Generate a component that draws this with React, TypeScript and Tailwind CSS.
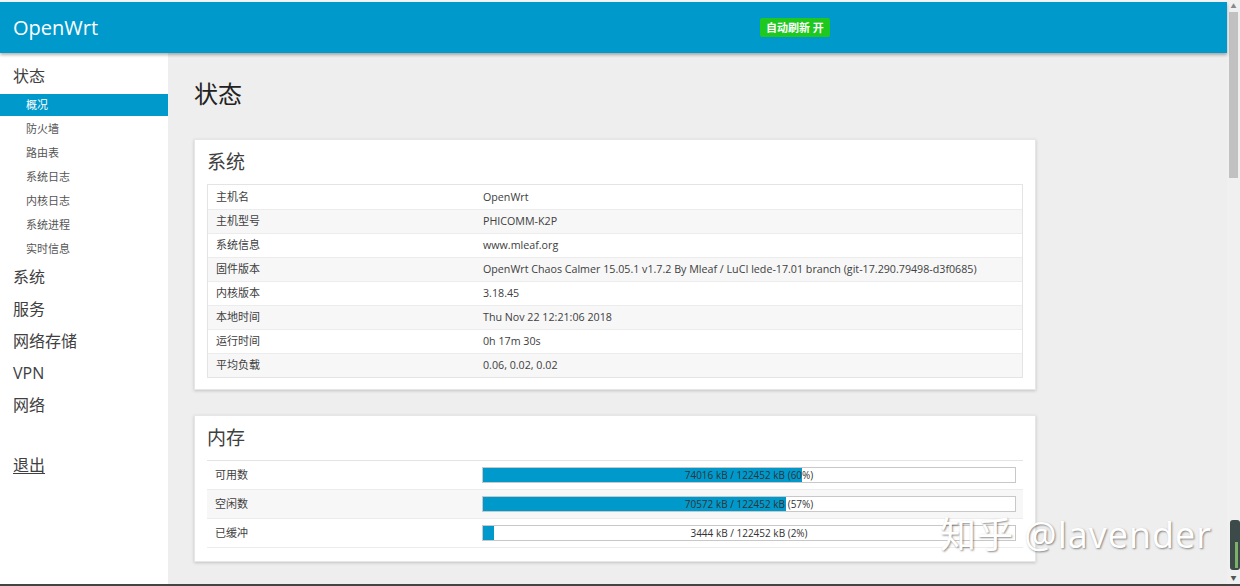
const font = { fontFamily: '"Open Sans", "Noto Sans CJK SC", sans-serif' };

const subMenu = ['概况', '防火墙', '路由表', '系统日志', '内核日志', '系统进程', '实时信息'];
const topMenu = ['系统', '服务', '网络存储', 'VPN', '网络'];

const sysRows = [
  ['主机名', 'OpenWrt'],
  ['主机型号', 'PHICOMM-K2P'],
  ['系统信息', 'www.mleaf.org'],
  ['固件版本', 'OpenWrt Chaos Calmer 15.05.1 v1.7.2 By Mleaf / LuCI lede-17.01 branch (git-17.290.79498-d3f0685)'],
  ['内核版本', '3.18.45'],
  ['本地时间', 'Thu Nov 22 12:21:06 2018'],
  ['运行时间', '0h 17m 30s'],
  ['平均负载', '0.06, 0.02, 0.02'],
];

const memRows = [
  { label: '可用数', text: '74016 kB / 122452 kB (60%)', pct: 60 },
  { label: '空闲数', text: '70572 kB / 122452 kB (57%)', pct: 57 },
  { label: '已缓冲', text: '3444 kB / 122452 kB (2%)', pct: 2 },
];

function Sidebar() {
  return (
    <div className="w-[168px] shrink-0 bg-white pt-[11px]">
      <div className="pl-[13px] h-[24px] leading-[24px] text-[16px] text-[#404040]">状态</div>
      <div className="mt-[6px]">
        {subMenu.map((s, i) => (
          <div
            key={s}
            className={
              i === 0
                ? 'h-[22px] leading-[22px] pl-[26px] text-[11px] bg-[#0099cc] text-white mb-[1px]'
                : 'h-[24px] leading-[24px] pl-[26px] text-[11px] text-[#555]'
            }
          >
            {s}
          </div>
        ))}
      </div>
      <div>
        {topMenu.map((s) => (
          <div key={s} className="h-[32px] leading-[32px] pl-[13px] text-[16px] text-[#404040]">
            {s}
          </div>
        ))}
      </div>
      <div className="mt-[32px] pl-[13px] text-[16px] text-[#404040] underline underline-offset-2">退出</div>
    </div>
  );
}

function Card({ title, children, className }: { title: string; children: React.ReactNode; className?: string }) {
  return (
    <div className={'w-[842px] bg-white shadow-[0_1px_3px_rgba(0,0,0,0.18)] border border-[#e6e6e6] px-[12px] ' + (className ?? '')}>
      <div className="h-[44px] leading-[44px] text-[19px] text-[#404040]">{title}</div>
      {children}
    </div>
  );
}

function SystemTable() {
  return (
    <div className="border border-[#e4e4e4]">
      {sysRows.map(([k, v], i) => (
        <div
          key={k}
          className={
            'flex h-[24px] items-center text-[11px] text-[#404040] border-t border-[#ececec] first:border-t-0 ' +
            (i % 2 === 1 ? 'bg-[#f7f7f7]' : 'bg-white')
          }
        >
          <div className="w-[275px] pl-[8px]">{k}</div>
          <div className="flex-1 whitespace-nowrap text-[10.7px]">{v}</div>
        </div>
      ))}
    </div>
  );
}

function MemTable() {
  return (
    <div className="border-t border-[#e4e4e4]">
      {memRows.map((r, i) => (
        <div
          key={r.label}
          className={
            'flex h-[29px] items-center text-[11px] text-[#404040] border-b border-[#ececec] ' +
            (i % 2 === 1 ? 'bg-[#f7f7f7]' : 'bg-white')
          }
        >
          <div className="w-[275px] pl-[8px]">{r.label}</div>
          <div className="relative w-[534px] h-[16px] border border-[#c8c8c8] bg-white">
            <div className="absolute left-0 top-0 bottom-0 bg-[#0099cc]" style={{ width: `${r.pct}%` }} />
            <div className="absolute inset-0 flex items-center justify-center text-[10px] text-[#333]">{r.text}</div>
          </div>
        </div>
      ))}
    </div>
  );
}

export default function App() {
  return (
    <div className="relative w-[1240px] h-[586px] overflow-hidden bg-[#eeeeee] flex flex-col" style={font}>
      <div className="flex flex-1 min-h-0">
        <div className="flex-1 flex flex-col min-w-0">
          <div className="h-[2px] bg-[#f4f4f4]" />
          <div className="relative z-10 h-[51px] bg-[#0099cc] flex items-center shadow-[0_2px_3px_rgba(0,0,0,0.3)]">
            <div className="w-[760px] pl-[13px] text-[20px] text-white">OpenWrt</div>
            <div className="h-[19px] leading-[19px] px-[6px] bg-[#1ec81e] text-white text-[11px] font-semibold rounded-[2px]">
              自动刷新 开
            </div>
          </div>
          <div className="flex flex-1 min-h-0">
            <Sidebar />
            <div className="flex-1 pl-[26px] pt-[24px]">
              <div className="h-[34px] leading-[34px] text-[24px] text-[#222]">状态</div>
              <Card title="系统" className="mt-[28px] pb-[11px]">
                <SystemTable />
              </Card>
              <Card title="内存" className="mt-[25px] pb-[13px]">
                <MemTable />
              </Card>
            </div>
          </div>
        </div>
        <div className="w-[13px] shrink-0 bg-[#f0f0f0] flex flex-col items-center">
          <div className="h-[12px] text-[6px] leading-[12px] text-[#888]">▲</div>
          <div className="w-[9px] h-[166px] bg-[#c1c1c1]" />
          <div className="flex-1" />
          <div className="h-[12px] text-[6px] leading-[12px] text-[#555]">▼</div>
        </div>
      </div>
      <div className="h-[2px] bg-[#444]" />
      <div className="absolute left-[940px] top-[508px] text-[36px] text-white tracking-[1px] [text-shadow:1px_1px_2px_rgba(0,0,0,0.45)]">
        知乎 @lavender
      </div>
      <div className="absolute left-[1230px] top-[520px] w-[10px] h-[50px] rounded-[3px] bg-[#3d4a4a] flex justify-end items-end p-[2px]">
        <div className="w-[3px] h-[26px] bg-[#7fb06a]" />
      </div>
    </div>
  );
}
